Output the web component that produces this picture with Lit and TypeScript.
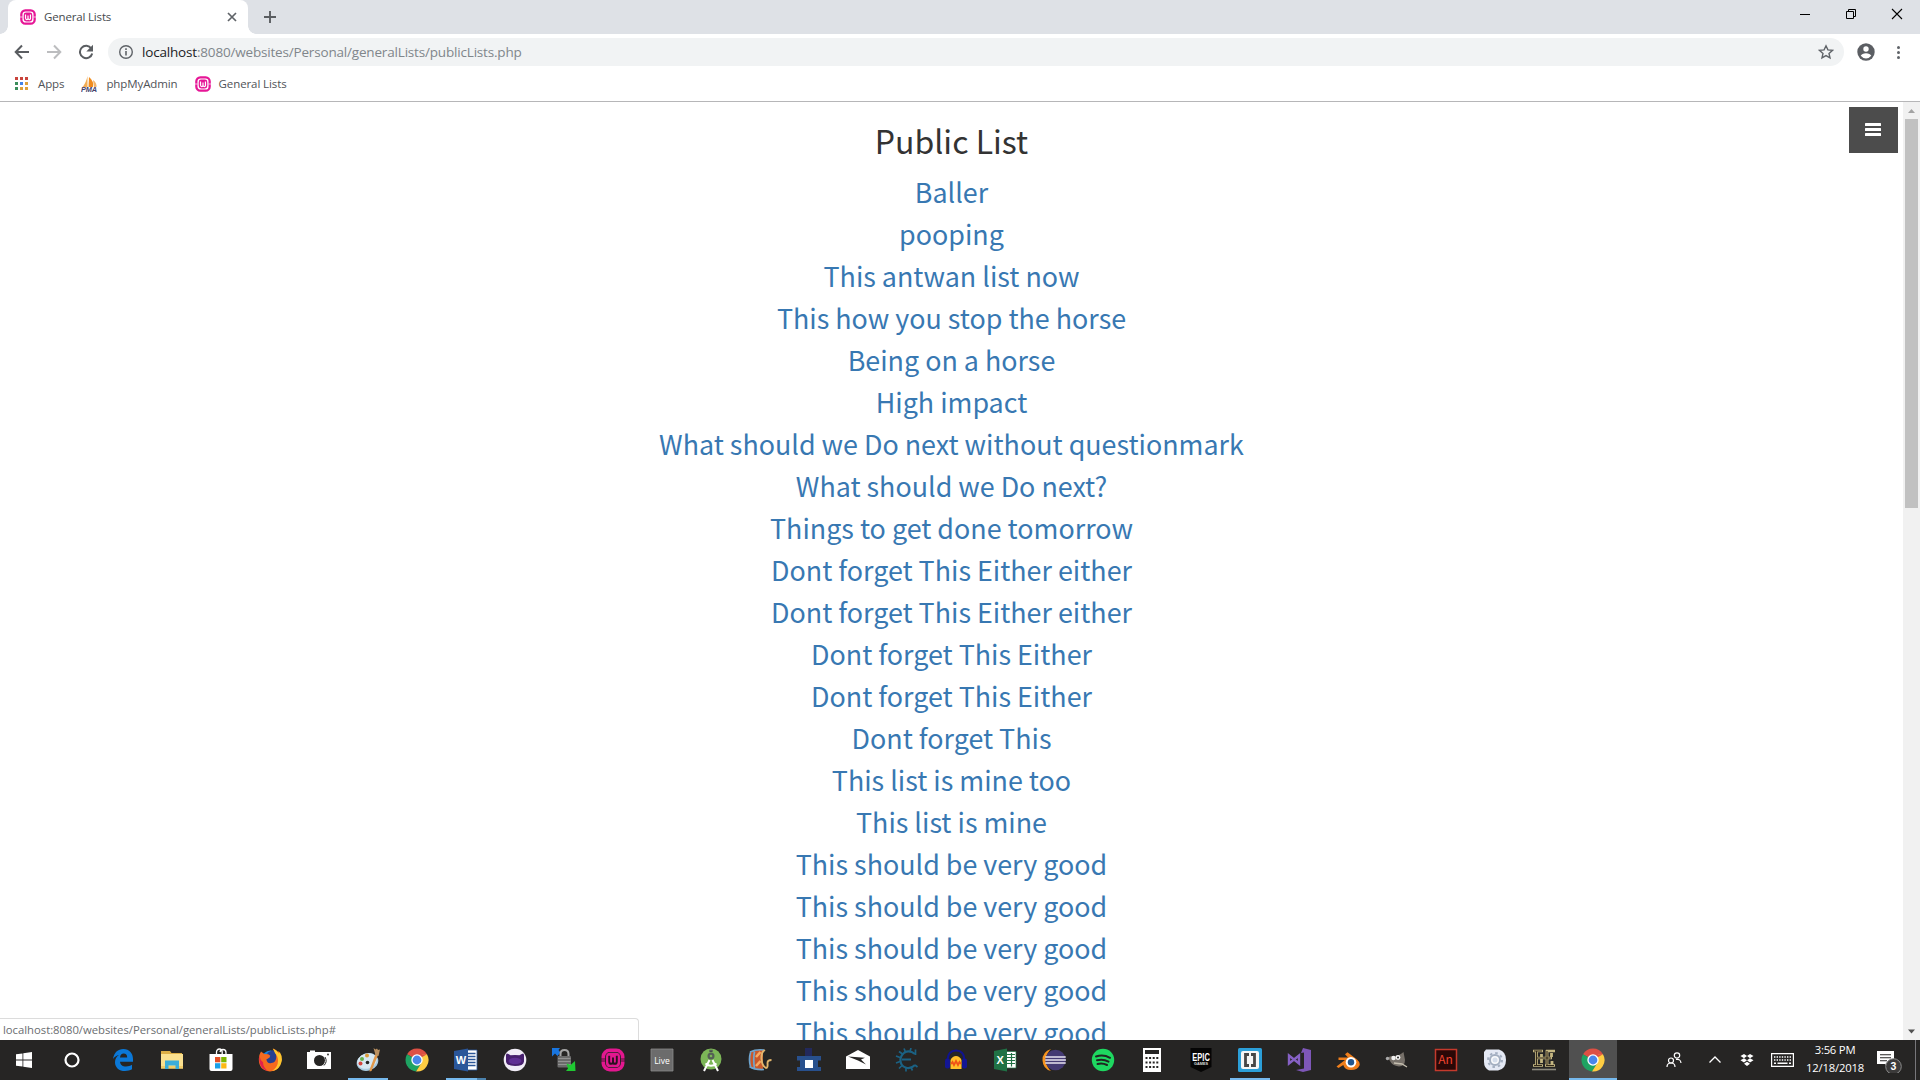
import { LitElement, html, css, svg } from "lit";
import { customElement } from "lit/decorators.js";

const lists = [
  "Baller", "pooping", "This antwan list now", "This how you stop the horse", "Being on a horse",
  "High impact", "What should we Do next without questionmark", "What should we Do next?",
  "Things to get done tomorrow", "Dont forget This Either either", "Dont forget This Either either",
  "Dont forget This Either", "Dont forget This Either", "Dont forget This", "This list is mine too",
  "This list is mine", "This should be very good", "This should be very good",
  "This should be very good", "This should be very good", "This should be very good",
];

const wamp = svg`
  <rect x="2" y="2" width="20" height="20" rx="6" fill="none" stroke="#e61696" stroke-width="3.4"/>
  <path d="M0 12h5M19 12h5" stroke="#f9c4e4" stroke-width="1.4"/>
  <rect x="5.6" y="5.4" width="12.8" height="13.2" rx="3.5" fill="#e61696"/>
  <path d="M8.3 8.300v5.200q0 2.300 1.900 2.300t1.800-2.300V9.800v3.700q0 2.300 1.900 2.300t1.800-2.300V8.300" fill="none" stroke="#fff" stroke-width="1.8"/>`;

const wampDark = svg`
  <rect x="2.300" y="2.300" width="19.400" height="19.400" rx="6.500" fill="none" stroke="#e3178f" stroke-width="3.600"/>
  <path d="M0 11h5M19 11h5M0 13h5M19 13h5" stroke="#26151f" stroke-width=".8"/>
  <rect x="5" y="4.800" width="14" height="14.400" rx="4" fill="#e3178f"/>
  <path d="M8.200 7.800v5.600q0 2.400 1.900 2.400t1.900-2.400V9.600v3.800q0 2.400 1.900 2.400t1.900-2.400V7.800" fill="none" stroke="#2a1220" stroke-width="1.900"/>`;

const chrome = svg`
  <path d="M12 12 2.040 6.250A11.500 11.500 0 0 1 21.960 6.250z" fill="#dd5044"/>
  <path d="M2.040 6.250A11.500 11.500 0 0 0 11 23.460L16.700 14.800 12 12z" fill="#1ea362"/>
  <path d="M21.960 6.250A11.500 11.500 0 0 1 11 23.460L17 14V6.250z" fill="#ffcd42"/>
  <path d="M12 6.250h9.960L17.200 9z" fill="#dd5044"/>
  <circle cx="12" cy="12" r="5.700" fill="#fff"/><circle cx="12" cy="12" r="4.400" fill="#4a86ea"/>`;

const icons = {
  edge: svg`<path d="M2 11C3 4.600 7 1 12.300 1 18.500 1 22 5.500 22 11v2.700H9c.2 3.200 2.800 4.800 6 4.800 2.400 0 4.300-.7 6-1.700v4.500C19 22.500 16.800 23 14 23 8 23 4 19.500 4 14.200c0-3.100 1.500-5.900 4-7.200C5.400 7.500 3.400 9 2 11zm7-1.500h7.200c0-2.500-1.300-4-3.500-4-2.100 0-3.400 1.600-3.700 4z" fill="#0b78d7"/>`,
  explorer: svg`<path d="M1 4.500V3h9l1.500 2H22v5H1z" fill="#dcae45"/><path d="M1 6h22v14.500H1z" fill="#fae08f"/><path d="M1 18h22v2.500H1z" fill="#f2cc67"/><path d="M5 21v-8.500h14V21h-3.500v-3.500h-7V21z" fill="#3badd9"/>`,
  store: svg`<path d="M7.500 7V4.300Q7.500 1 10.500 1q2.600 0 2.700 3v3M11 4q.5-2.500 3-2.500 3 0 3 3V7" fill="none" stroke="#fff" stroke-width="1.300"/><path d="M.5 6h23v15q0 2-2 2h-19q-2 0-2-2z" fill="#fff"/><path d="M6 9h5.300v5.300H6z" fill="#e64f25"/><path d="M12.200 9h5.300v5.300h-5.300z" fill="#7db700"/><path d="M6 15.200h5.300v5.300H6z" fill="#1aa0e8"/><path d="M12.200 15.200h5.300v5.300h-5.300z" fill="#fdb813"/>`,
  firefox: svg`<circle cx="12.500" cy="11.500" r="9" fill="#1b83d8"/><path d="M13 3q-4 1-4 4l3 2-4 2q0 5 5 5 5-1 6-6 0-4-4-8z" fill="#253f91"/><path d="M3 3.500 6.300 6l4 .3 2 1.500-1 2-3 1.700q1 4.500 5 3.500 5-.5 5-6 0-4-3.500-8.500 3 .5 5 4l1-1.500q2.700 4.500 2 10Q21.500 23.500 12 23.500.8 22.500.8 11 1 6.500 3 3.500z" fill="#f56a1e"/><path d="M14.800.5q4 1.500 6 5l1-1.500q2.700 4.500 2 9Q22 22 14 23q6-4 6-10 0-5-3-8z" fill="#ffc52e"/><path d="M1.500 8Q0 20 10 23.300q-5-4-5-9Q2 12 1.500 8z" fill="#e2214b"/>`,
  camera: svg`<path d="M0 4h3V2.500h5V4h16v17H0z" fill="#fff"/><circle cx="12.500" cy="12.500" r="5.500" fill="#262524"/><path d="M17 17.500a7 7 0 0 0 1-8.500" stroke="#262524" fill="none"/><circle cx="21" cy="6.500" r=".9" fill="#262524"/>`,
  paint: svg`<ellipse cx="11.500" cy="14" rx="11" ry="8.700" fill="#a9cbe0" transform="rotate(-18 11.500 14)"/><ellipse cx="11" cy="13" rx="10" ry="7.500" fill="#d7e8f2" transform="rotate(-18 11 13)"/><circle cx="6" cy="11" r="2" fill="#65b04a"/><circle cx="11" cy="7.500" r="2" fill="#db9b39"/><circle cx="4.500" cy="15.500" r="2" fill="#d3453c"/><circle cx="11.500" cy="14.500" r="1.800" fill="#262524"/><path d="m19.500 6 2.500 1-6.500 16-2 .5.200-2z" fill="#e0984b"/><path d="m17.500 0 2 1.500 1.500-1 1 1.500 2-.5-1.500 6.500-3-1z" fill="#b99060"/>`,
  chrome,
  word: svg`<path d="M12 2h11v20H12z" fill="#fff" stroke="#2a5699" stroke-width=".8"/><path d="M14 5.500h7.500M14 8.500h7.500M14 11.500h7.500M14 14.500h7.500M14 17.500h7.500" stroke="#2a5699" stroke-width="1.300"/><path d="M0 3 14 .5v23L0 21z" fill="#2a5699"/><text class="glyph" x="1.800" y="16" font-size="11" fill="#fff">W</text>`,
  github: svg`<circle cx="12" cy="12" r="11.300" fill="#f1edf7"/><path d="M3 7q.2-1 .8-1.500 2 .5 3.700 1.800 4.500-.8 9 0 1.700-1.300 3.700-1.800.6.500.8 1.500v6.500q-.5 4.500-9 4.500t-9-4.500z" fill="#47206e"/><ellipse cx="12" cy="13" rx="6.500" ry="3.300" fill="#5f2f94"/>`,
  lock: svg`<path d="M0 0h8L6.500 2l2 2.500-3 3.500-2.500-2.500L0 8.500z" fill="#1976e0"/><path d="M8.500 9V6q0-4 4-4t4 4v3" fill="none" stroke="#a5a5a5" stroke-width="2"/><rect x="5.500" y="8" width="13.500" height="11.500" rx="1" fill="#6b6b6b"/><path d="M6 10.500h12.500M6 13.500h12.500M6 16.500h12.500" stroke="#939393"/><path d="m14.500 15.500 4 1.500 4.500-4 .5 10h-9.500l2-2.500z" fill="#1fc832"/>`,
  wamp: wampDark,
  live: svg`<path d="M1 1h22v22H1z" fill="#6c6c6c" stroke="#8a8a8a" stroke-width=".8"/><text x="4.200" y="15.500" font-size="8.500" fill="#fff" font-family="Open Sans">Live</text>`,
  android: svg`<circle cx="12" cy="11" r="10.500" fill="#7cb657"/><circle cx="12" cy="8" r="3.500" fill="#555f56"/><path d="M11 4V2.500h2V4" stroke="#555f56" stroke-width="1.500"/><circle cx="12" cy="8" r="1.300" fill="#7cb657"/><path d="M10.500 12 5 23M13.500 12 19 23M6.500 15.500q5.500 4.500 11 0" fill="none" stroke="#fff" stroke-width="2"/>`,
  drum: svg`<path d="M2 4q6-3 13-2v19Q9 22 2 19z" fill="#c9582a"/><path d="M2 4q6-3 14-2M1.500 18.500q5 3.500 14.500 3M2.500 4.500q-2 7 0 14M6.500 3.500q-1.500 8 0 17" fill="none" stroke="#6ea5cf" stroke-width="1.700"/><path d="m8 9 4.500-5M8 18l4.500-5" stroke="#f8a860" stroke-width="2.600"/><path d="M17 2q-4 2-3.500 9T18 20q2 0 1.500-5 0-3 4-3" fill="none" stroke="#e2b56c" stroke-width="1.900"/>`,
  castle: svg`<path d="M8 0h7v8H8z" fill="#22295c"/><path d="M0 8h24v4.500h-3V19h3v4H0v-4h3v-6.500H0z" fill="#28508d"/><path d="M8 12h8v8H8z" fill="#fff"/>`,
  mail: svg`<path d="M0 8.500 12 2l12 6.500V21H0z" fill="#fff"/><path d="m2 8.500 17 1.300-4 1.800 5 5-8-4z" fill="#262524"/>`,
  cyan: svg`<path d="M20 6Q14.500 1.500 9.500 4.500 5 8 5.500 13t5 6.500q5 2 9.500-2.500M7 11.500h9" fill="none" stroke="#1b6284" stroke-width="2.200"/><path d="M7.500 6 4 3.500M5 9.500 1 8M5 13.500 1 15M7 17.500 4 20.500M10.500 4 9 .5M15 3.500l1-3.500M11 20v3.500M16 19.500l1.500 3M20 17l2.500 2M20.500 7V1.500" stroke="#1b6284" stroke-width="1.700"/>`,
  audacity: svg`<path d="M3.500 12Q4 2.500 12 2.500T20.500 12" fill="none" stroke="#10138f" stroke-width="2.200"/><path d="M6.500 21V12q2-4 5.500-4t5.500 4v9z" fill="#ffc02a"/><path d="m7 16 1.500-2 1.500 3 2-4 2 4 1.500-3 1.500 2" fill="none" stroke="#f05417" stroke-width="1.800"/><rect x="1" y="10.500" width="5" height="10" rx="2.200" fill="#131694"/><rect x="18" y="10.500" width="5" height="10" rx="2.200" fill="#131694"/>`,
  excel: svg`<path d="M12 3.500h11v16.500H12z" fill="#fff" stroke="#207245" stroke-width=".7"/><path d="M14 6.500h8M14 9.500h8M14 12.500h8M14 15.500h8M18.500 5v13.500" stroke="#207245" stroke-width="1.200"/><path d="M1 3 14 .5v23L1 21z" fill="#207245"/><text class="glyph" x="3.500" y="16" font-size="11" fill="#fff">X</text>`,
  eclipse: svg`<path d="M9 1Q0 4 .5 12.500T9 23Q4 18.500 4 12T9 1z" fill="#f7941e"/><circle cx="13.500" cy="12" r="10.300" fill="#443a73"/><path d="M3.300 9h20.400M3.200 12h20.700M3.300 15h20.400" stroke="#e6e3ef" stroke-width="1.400"/>`,
  spotify: svg`<circle cx="12" cy="12" r="11.200" fill="#1ed760"/><path d="M5 8.500q7.500-2.300 14 1.300M6 12.300q6-1.700 11.500 1.300M6.500 16q5-1.300 9.500 1" fill="none" stroke="#202522" stroke-width="2" stroke-linecap="round"/>`,
  calc: svg`<path d="M3 0h18v24H3z" fill="#fff"/><path d="M5 2h14v4H5z" fill="#262524"/><path d="M5.500 10h13M5.500 14.500h13M5.500 19h13" stroke="#262524" stroke-width="2" stroke-dasharray="2 1.600"/>`,
  epic: svg`<path d="M1.500 0h21v19L12 24 1.500 19z" fill="#050505"/><text class="glyph" x="3.300" y="12.500" font-size="11.500" textLength="17.500" lengthAdjust="spacingAndGlyphs" fill="#fff">EPIC</text><text class="glyph" x="5" y="17.300" font-size="4" textLength="14" lengthAdjust="spacingAndGlyphs" fill="#ddd">GAMES</text>`,
  brackets: svg`<rect width="24" height="24" rx="1.500" fill="#2b9fd8"/><rect x="3" y="3" width="18" height="18" rx="2" fill="#f5f5f5"/><path d="M11 6.500H7.500v11H11M13 6.500h3.500v11H13" fill="none" stroke="#464646" stroke-width="2.800"/>`,
  vs: svg`<path d="M16 0l8 2v20l-8 2-7-2 8-1.500v-16L14 5z" fill="#7e57b8"/><path d="M2 7.500v8L12 7.500v8z" fill="none" stroke="#8661c5" stroke-width="2.400"/>`,
  blender: svg`<path d="m.5 18.500 8.500-6.500H2.500V9.500h9.500L9 6.300l2.500-2 9.500 7.200q3.500 3 2.500 6-2 4.500-8.500 4.500-6.500 0-7.700-5L2.500 20z" fill="#ef7e1b"/><circle cx="15" cy="14.300" r="5.300" fill="#fff"/><circle cx="15" cy="14.300" r="3.200" fill="#20568f"/>`,
  gimp: svg`<path d="M3 9.500q2-2 6-1.500Q14 8 18.500 4l1.500 8q0 6-6 6.500-7-1-9-5.500z" fill="#77716a"/><circle cx="8.500" cy="10" r="2.200" fill="#eee"/><circle cx="13" cy="9.500" r="2.400" fill="#f4f4f4"/><circle cx="13" cy="9.500" r="1" fill="#222"/><circle cx="2.500" cy="10.500" r="1.700" fill="#aaa"/><path d="m9 15 8 1 5 3" stroke="#c5bfb0" stroke-width="1.300" fill="none"/>`,
  an: svg`<path d="M1.500 1.500h21v21h-21z" fill="#2a0807" stroke="#c43a2c" stroke-width="1.500"/><text x="4.200" y="16" font-size="12" font-family="Noto Sans CJK SC" fill="#f0442f">An</text>`,
  gear: svg`<path d="M3 1.500h13q7 2 7 10.500 0 9-8 10.500H6Q1 20 1 14V4z" fill="#e4e9f4"/><circle cx="12" cy="12" r="5" fill="#f9fafc" stroke="#a3afc1" stroke-width="2"/><circle cx="12" cy="12" r="7" fill="none" stroke="#a3afc1" stroke-width="2" stroke-dasharray="2.500 3"/><circle cx="12" cy="12" r="2.500" fill="#d5deeb"/>`,
  ee: svg`<g fill="none" stroke="#c4b681"><path d="M1 3h10M14 3h9" stroke-width="2.600"/><path d="M4.500 2v16M9.500 6v9M15 2v16M19.500 5v4M20 13v5" stroke-width="2.800"/><path d="M5 10h15M1 17.500h10M13 17.500h10" stroke-width="2.600"/></g><path d="M2 3h8M4.500 3v14M15 3v14M5 10h14M2 17.500h8M14 17.500h8" fill="none" stroke="#33291a" stroke-width="1.100"/><path d="M0 21.500h24" stroke="#8b887d" stroke-width="1.600"/>`,
  active: chrome,
};

@customElement("app-root")
export class AppRoot extends LitElement {
  static styles = css`
    :host { display: block; width: 1920px; height: 1080px; overflow: hidden; background: #fff; font-family: "Open Sans", sans-serif; }
    * { box-sizing: border-box; }
    svg { display: block; flex: none; }
    .screen { display: flex; flex-direction: column; height: 1080px; }
    .tabs { height: 34px; flex: none; background: #dee1e6; display: flex; align-items: stretch; }
    .tab { margin-left: 8px; width: 240px; background: #fff; border-radius: 8px 8px 0 0; display: flex; align-items: center; padding: 0 10px 0 12px; gap: 8px; font-size: 11.500px; letter-spacing: -.16px; color: #45494d; position: relative; }
    .tab span { margin-top: -2px; }
    .tab::before, .tab::after { content: ""; position: absolute; bottom: 0; width: 8px; height: 8px; }
    .tab::before { left: -8px; background: radial-gradient(circle at 0 0, transparent 7.500px, #fff 8px); }
    .tab::after { right: -8px; background: radial-gradient(circle at 100% 0, transparent 7.500px, #fff 8px); }
    .grow { flex: 1; }
    .plus { margin: 11px 0 0 16px; }
    .win { display: flex; gap: 34px; padding: 8px 17px 0 0; }
    .bar { height: 36px; flex: none; display: flex; align-items: center; padding: 0 13px 0 14px; }
    .bar .nav { display: flex; gap: 16px; margin-right: 14px; }
    .omni { flex: 1; height: 28px; border-radius: 14px; background: #f1f3f4; display: flex; align-items: center; padding: 0 10px; font-size: 13.500px; letter-spacing: -.18px; color: #80868b; }
    .omni .url { margin-left: 8px; line-height: 28px; }
    .omni b { font-weight: 400; color: #202124; }
    .profile { margin: 0 14px 0 13px; }
    .marks { height: 32px; flex: none; border-bottom: 1px solid #b6b6b8; display: flex; align-items: center; padding: 0 0 3px 15px; font-size: 11.500px; letter-spacing: -.1px; color: #4f5357; }
    .marks span { margin: -2px 0 0 8px; }
    .marks .apps-label { margin-left: 9px; }
    .marks .gap { margin-left: 17px; }
    .page { height: 938px; flex: none; display: flex; position: relative; overflow: hidden; }
    .content { flex: 1; padding-top: 18px; display: flex; flex-direction: column; align-items: center; overflow: hidden; font-family: "Noto Sans CJK SC", sans-serif; }
    h1 { margin: 0 0 11px; font-size: 32px; line-height: 40px; font-weight: 400; color: #333; flex: none; }
    .content a { font-size: 26.870px; line-height: 42px; height: 42px; flex: none; color: #3878b2; white-space: nowrap; }
    .menu { position: absolute; right: 22px; top: 5px; width: 49px; height: 46px; background: #4c4c4c; display: flex; flex-direction: column; gap: 2px; padding: 16px 16px; }
    .menu i { height: 3px; width: 16px; background: #fff; border-radius: .5px; flex: none; }
    .scroll { width: 17px; background: #f1f1f1; display: flex; flex-direction: column; align-items: center; justify-content: space-between; }
    .thumb { width: 13px; height: 389px; background: #c1c1c1; flex: none; }
    .status { position: absolute; left: 0; bottom: 0; width: 639px; height: 22px; background: #fff; border: 1px solid #dcdcdc; border-left: 0; border-bottom: 0; border-radius: 0 4px 0 0; font-size: 11.300px; letter-spacing: -.02px; line-height: 21px; padding-left: 3px; color: #6a6d70; }
    .task { height: 40px; flex: none; background: #262524; display: flex; color: #fff; }
    .cell { width: 48px; height: 40px; display: flex; align-items: center; justify-content: center; flex: none; position: relative; }
    .apps { display: flex; gap: 1px; margin-left: 3px; }
    .open::after { content: ""; position: absolute; bottom: 0; left: 4px; width: 40px; height: 2px; background: #76b9ed; }
    .stack::after { background: linear-gradient(90deg, #76b9ed 31px, #4b82ad 31px); }
    .front { background: #505050; }
    .front::after { content: ""; position: absolute; bottom: 0; left: 0; width: 48px; height: 2px; background: #76b9ed; }
    .glyph { font-family: "Liberation Sans", sans-serif; font-weight: 700; }
    .tray { margin-left: auto; display: flex; align-items: center; }
    .up { margin-left: 26px; }
    .drop { margin-left: 18px; }
    .keys { margin-left: 17px; }
    .clock { width: 70px; text-align: center; font-size: 11.300px; line-height: 18px; letter-spacing: -.22px; margin: 0 7px 2px 6px; }
    .peek { width: 5px; height: 40px; border-left: 1px solid #77767a; margin-left: 12px; }
  `;

  private app(name: string) {
    const state = name === "active" ? "front" : name === "word" ? "open stack" : name === "paint" || name === "brackets" ? "open" : "";
    return html`<div class="cell ${state}"><svg width="24" height="24" viewBox="0 0 24 24">${icons[name as keyof typeof icons]}</svg></div>`;
  }

  render() {
    return html`<div class="screen">
      <div class="tabs">
        <div class="tab">
          <svg width="16" height="16" viewBox="0 0 24 24">${wamp}</svg><span>General Lists</span><span class="grow"></span>
          <svg width="12" height="12" viewBox="0 0 12 12"><path d="m2 2 8 8M10 2l-8 8" stroke="#5f6368" stroke-width="1.700"/></svg>
        </div>
        <svg class="plus" width="12" height="12" viewBox="0 0 12 12"><path d="M6 0v12M0 6h12" stroke="#5a5d61" stroke-width="1.900"/></svg>
        <span class="grow"></span>
        <div class="win">
          <svg width="12" height="12" viewBox="0 0 12 12"><path d="M1 6.500h10" stroke="#000"/></svg>
          <svg width="12" height="12" viewBox="0 0 12 12"><path d="M1.500 3.500h7v7h-7zM3.500 3V1.500h7v7H9" fill="none" stroke="#000"/></svg>
          <svg width="12" height="12" viewBox="0 0 12 12"><path d="m1 1 10 10M11 1 1 11" stroke="#000" stroke-width="1.100"/></svg>
        </div>
      </div>
      <div class="bar">
        <div class="nav">
          <svg width="16" height="16" viewBox="0 0 16 16"><path d="M15 8H2M8 1.500 1.700 8 8 14.500" fill="none" stroke="#5a5d61" stroke-width="2"/></svg>
          <svg width="16" height="16" viewBox="0 0 16 16"><path d="M1 8h13M8 1.500 14.300 8 8 14.500" fill="none" stroke="#bcbdbf" stroke-width="2"/></svg>
          <svg width="16" height="16" viewBox="0 0 16 16"><path d="M13.300 4.500A6.200 6.200 0 1 0 14.200 9.500" fill="none" stroke="#5a5d61" stroke-width="2"/><path d="M15 .8v6.700H8.300z" fill="#5a5d61"/></svg>
        </div>
        <div class="omni">
          <svg width="16" height="16" viewBox="0 0 16 16"><circle cx="8" cy="8" r="6.300" fill="none" stroke="#5f6368" stroke-width="1.400"/><path d="M8 7v4.500M8 4.300V6" stroke="#5f6368" stroke-width="1.600"/></svg>
          <span class="url"><b>localhost</b>:8080/websites/Personal/generalLists/publicLists.php</span>
          <span class="grow"></span>
          <svg width="16" height="16" viewBox="0 0 16 16"><path d="m8 1.800 1.900 4.100 4.500.5-3.400 3 1 4.500L8 11.600l-4 2.300 1-4.500-3.400-3 4.500-.5z" fill="none" stroke="#5f6368" stroke-width="1.400"/></svg>
        </div>
        <svg class="profile" width="18" height="18" viewBox="0 0 18 18"><circle cx="9" cy="9" r="8.700" fill="#5b5e63"/><circle cx="9" cy="6" r="2.700" fill="#fff"/><path d="M3.700 12.800q1.300-2.500 5.300-2.500t5.300 2.500Q12 15.500 9 15.500t-5.300-2.700z" fill="#fff"/></svg>
        <svg width="18" height="16" viewBox="0 0 18 16"><g fill="#5f6368"><circle cx="9.500" cy="3.500" r="1.500"/><circle cx="9.500" cy="8.500" r="1.500"/><circle cx="9.500" cy="13.500" r="1.500"/></g></svg>
      </div>
      <div class="marks">
        <svg width="14" height="14" viewBox="0 0 14 14"><path d="M0 0h3v3H0zM5 0h3v3H5zM10 0h3v3h-3z" fill="#c9443c"/><path d="M0 5h3v3H0zM0 10h3v3H0z" fill="#3b8d5b"/><path d="M5 5h3v3H5z" fill="#4384e8"/><path d="M10 5h3v3h-3zM5 10h3v3H5zM10 10h3v3h-3z" fill="#dea13a"/></svg>
        <span class="apps-label">Apps</span>
        <svg class="gap" width="17" height="16" viewBox="0 0 17 16"><path d="M6.500 0v11H1.500Q5 7 6.500 0z" fill="#f3ad55"/><path d="M8 1q5 4 4 10H7.500z" fill="#f08c1e"/><path d="M12 4q4 3 3.500 7H13z" fill="#f2b46a"/><text class="glyph" x="0" y="16" font-size="6.500" font-style="italic" textLength="16" lengthAdjust="spacingAndGlyphs" fill="#44426c">PMA</text></svg>
        <span>phpMyAdmin</span>
        <svg class="gap" width="16" height="16" viewBox="0 0 24 24">${wamp}</svg>
        <span>General Lists</span>
      </div>
      <div class="page">
        <div class="content"><h1>Public List</h1>${lists.map((t) => html`<a>${t}</a>`)}</div>
        <div class="scroll">
          <svg width="17" height="17" viewBox="0 0 17 17"><path d="m5 11 3.500-4L12 11z" fill="#a3a3a3"/></svg>
          <div class="thumb"></div><span class="grow"></span>
          <svg width="17" height="17" viewBox="0 0 17 17"><path d="m5 6.500 3.500 4 3.500-4z" fill="#505050"/></svg>
        </div>
        <div class="menu"><i></i><i></i><i></i></div>
        <div class="status">localhost:8080/websites/Personal/generalLists/publicLists.php#</div>
      </div>
      <div class="task">
        <div class="cell"><svg width="16" height="16" viewBox="0 0 16 16"><path d="M0 2.300 6.500 1.400v6.200H0zM7.300 1.300 16 0v7.600H7.300zM0 8.400h6.500v6.200L0 13.700zM7.300 8.400H16V16l-8.700-1.300z" fill="#fff"/></svg></div>
        <div class="cell"><svg width="18" height="18" viewBox="0 0 18 18"><circle cx="9" cy="9" r="6.500" fill="none" stroke="#fff" stroke-width="2.200"/></svg></div>
        <div class="apps">${Object.keys(icons).map((n) => this.app(n))}</div>
        <div class="tray">
          <svg width="16" height="16" viewBox="0 0 16 16"><g fill="none" stroke="#fff" stroke-width="1.200"><circle cx="11" cy="3.500" r="2.700"/><circle cx="5" cy="8.500" r="2.500"/><path d="M1 15q0-4 4-4t4 4M10 7.500q4.500-1 5 3.500"/></g></svg>
          <svg class="up" width="14" height="14" viewBox="0 0 14 14"><path d="m1.500 9.500 5.500-5.500 5.500 5.500" fill="none" stroke="#fff" stroke-width="1.300"/></svg>
          <svg class="drop" width="14" height="14" viewBox="0 0 14 14"><path d="m4 1 3 2-3 2.200L.5 3zM10 1l3.500 2L10 5.200 7 3zM4 5.300l3 2-3 2.200L.5 7.300zM10 5.300l3.500 2L10 9.500l-3-2.200zM7 8.800l3 2L7 13l-3-2.200z" fill="#fff"/></svg>
          <svg class="keys" width="23" height="14" viewBox="0 0 23 14"><path d="M.6.600h21.800v12.800H.6z" fill="none" stroke="#fff" stroke-width="1.200"/><path d="M3 4h17M3 7h17" stroke="#fff" stroke-width="1.400" stroke-dasharray="1.400 1.200"/><path d="M3 10.300h2M6.500 10.300h10M18 10.300h2" stroke="#fff" stroke-width="1.400"/></svg>
          <div class="clock">3:56 PM<br>12/18/2018</div>
          <svg width="26" height="26" viewBox="0 0 26 26"><path d="M0 4h17v13h-5v4l-4-4H0z" fill="#fff"/><path d="M3 7.700h11M3 10.700h11M3 13.700h7" stroke="#262524" stroke-width="1.100"/><circle cx="16.500" cy="19.500" r="7.800" fill="#3b3a3a" stroke="#8a8a8a" stroke-width="1"/><text class="glyph" x="13.600" y="23.300" font-size="10.500" fill="#fff">3</text></svg>
          <div class="peek"></div>
        </div>
      </div>
    </div>`;
  }
}
